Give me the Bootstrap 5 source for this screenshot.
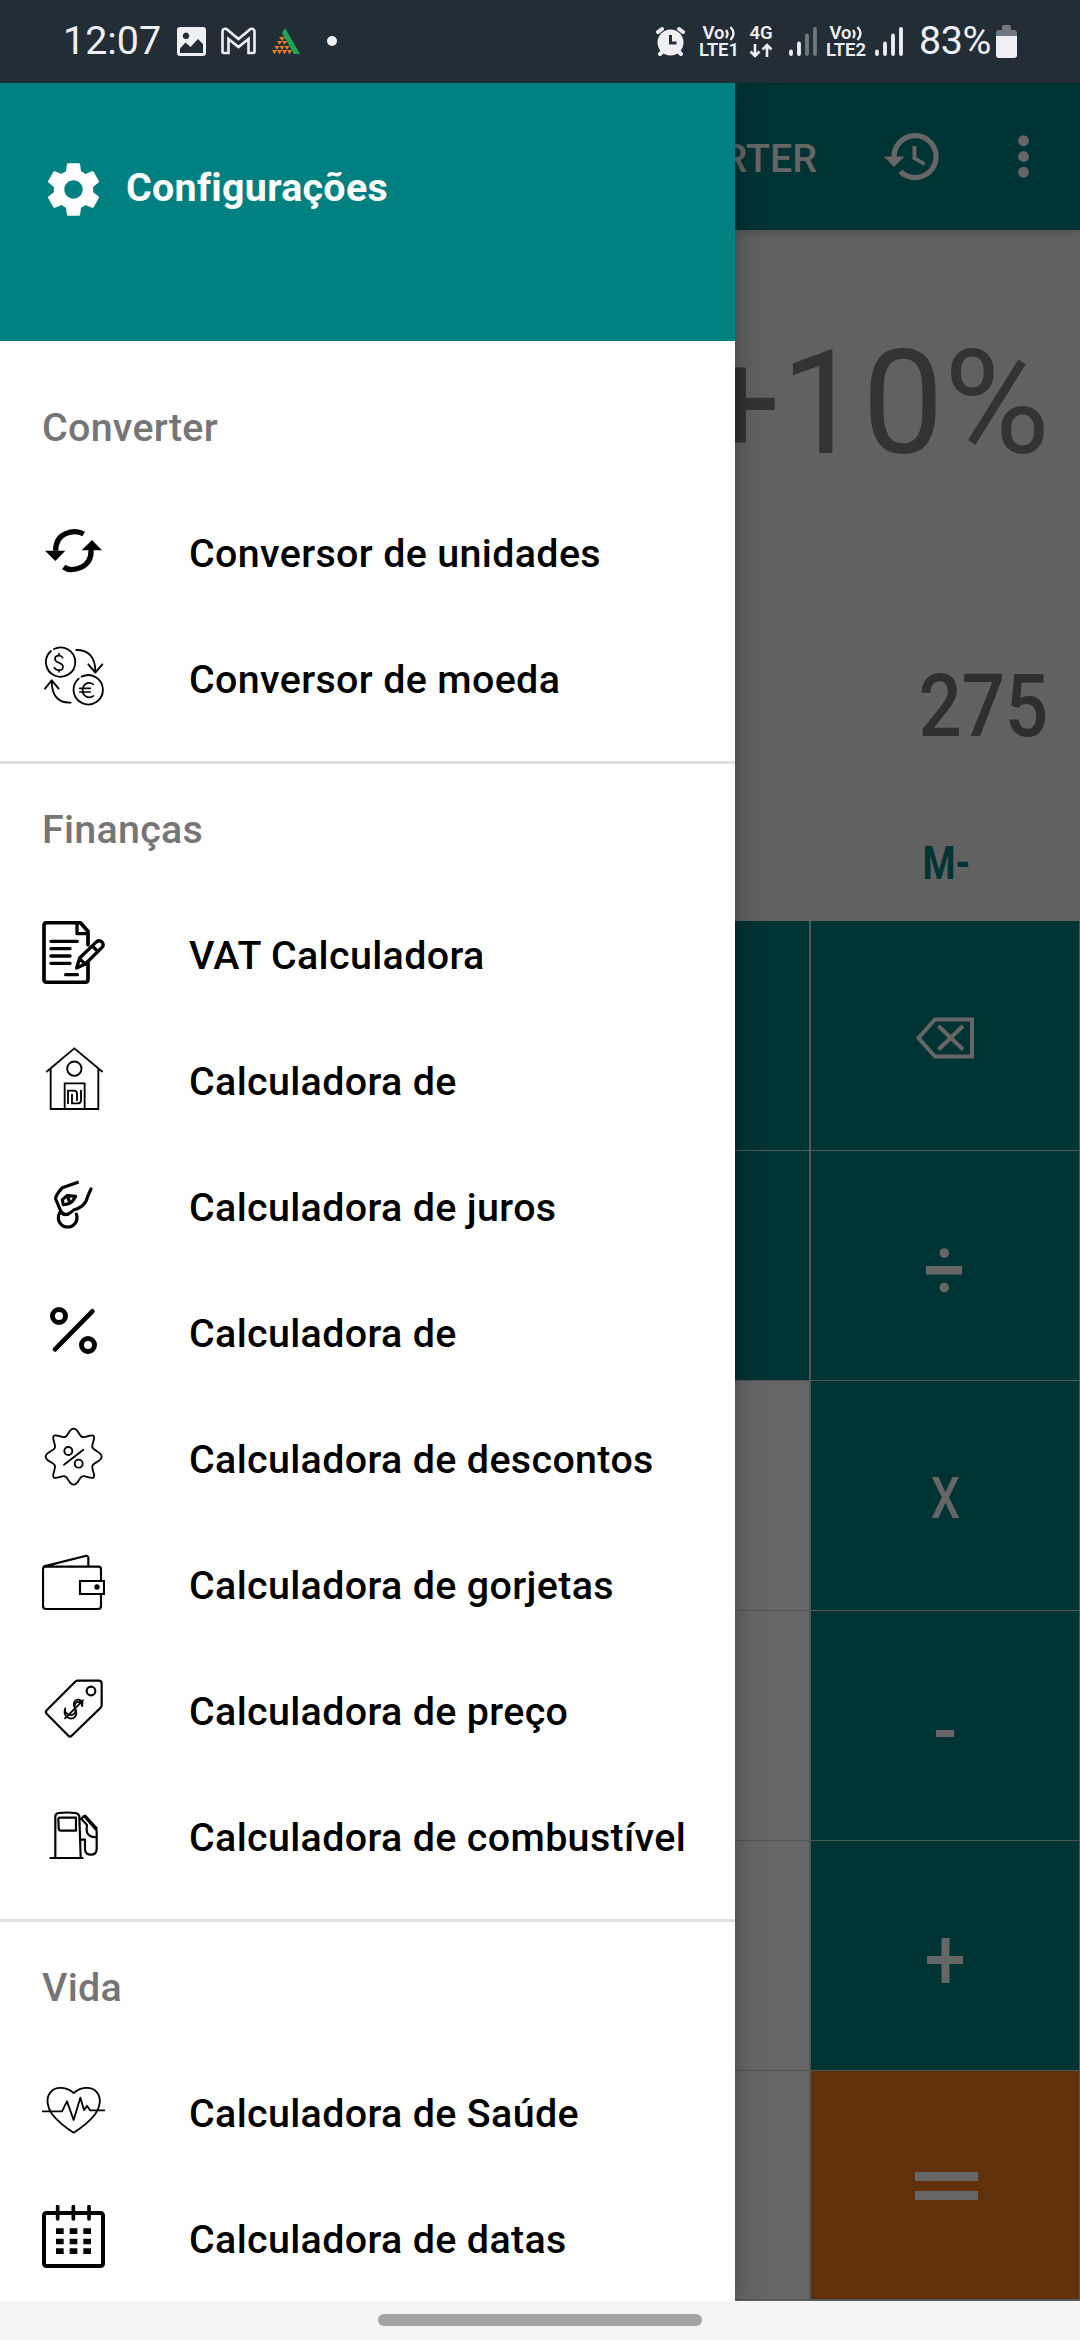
<!DOCTYPE html>
<html lang="pt">
<head>
<meta charset="utf-8">
<meta name="viewport" content="width=device-width, initial-scale=1">
<title>Calculadora</title>
<link rel="stylesheet" href="https://cdn.jsdelivr.net/npm/bootstrap@5.3.0/dist/css/bootstrap.min.css">
<style>
  body { font-family: Roboto, "Liberation Sans", sans-serif; width: 1080px; height: 2340px; overflow: hidden; background: #616161; }
  svg { display: block; flex: none; }
  .status { height: 83px; background: #232d36; color: #eef0f3; }
  .clock { font-size: 39.4px; line-height: 46px; padding-top: 18px; }
  .clock-time { padding-left: 63px; width: 177px; }
  .clock-batt { width: 75px; letter-spacing: -.4px; margin-left: 1px; margin-right: -1px; }
  .net { font-size: 18.5px; line-height: 17px; font-weight: 600; text-align: center; width: 42px; padding-top: 25px; }
  .stage { height: 2218px; }
  .drawer { width: 735px; z-index: 2; box-shadow: 0 0 26px rgba(0,0,0,.35); overflow: hidden; clip-path: inset(0 -40px 0 0); }
  .drawer-head { height: 258px; background: #008080; padding: 75px 42px 0; gap: 21px; font-size: 39.4px; line-height: 46px; font-weight: 700; letter-spacing: .28px; }
  .drawer-head span { padding-top: 7px; }
  .sect { padding-bottom: 21px; border-bottom: 3px solid #e0e0e0; }
  .sect-first { padding-top: 21px; }
  .sect:last-of-type { border: 0; }
  .sect-title { height: 126px; padding: 43px 42px 0; font-size: 39.4px; line-height: 46px; font-weight: 500; letter-spacing: .28px; color: #757575; }
  .entry { height: 126px; padding: 31px 0 0 42px; gap: 84px; font-size: 39.4px; line-height: 46px; font-weight: 500; letter-spacing: .35px; color: #000; white-space: nowrap; }
  .entry span { padding-top: 12px; }
  .ln { fill: none; stroke: #000; stroke-linecap: round; stroke-linejoin: round; }
  .app { width: 345px; color: #666; }
  .topbar { height: 147px; background: #033; padding-right: 25px; font-size: 39.4px; font-weight: 500; box-shadow: 0 2px 8px rgba(0,0,0,.2); }
  .topbar span { margin-right: 64px; padding-top: 4px; }
  .display { height: 691px; background: #616161; color: #333; }
  .expr { font-size: 145px; line-height: 170px; padding: 88px 30px 0 0; white-space: nowrap; }
  .result { font-size: 87px; line-height: 102px; font-weight: 500; padding: 167px 32px 0 0; color: #2f2f2f; }
  .result span, .mem span { display: inline-block; transform: scaleX(.875); transform-origin: 100% 50%; }
  .mem { font-size: 46px; line-height: 54px; font-weight: 700; padding: 79px 110px 0 0; color: #033; }
  .mem span { transform: scaleX(.82); }
  .keys { height: 230px; border-bottom: 1px solid #4f5857; }
  .keys:last-child { height: 229px; }
  .side { width: 74px; background: #666; }
  .teal { background: #033; }
  .op { border-left: 2px solid #4f5857; border-right: 1px solid #4f5857; }
  .orange { background: #60310a; }
  .key-x { display: inline-block; font-size: 58px; line-height: 68px; font-weight: 500; transform: scaleX(.8); padding-top: 5px; }
  .gesture { height: 39px; background: #f5f5f5; padding-top: 13px; }
  .pill { width: 324px; height: 12px; background: #a3a3a3; }
</style>
<script src="https://cdn.jsdelivr.net/npm/bootstrap@5.3.0/dist/js/bootstrap.bundle.min.js"></script>
</head>
<body>
<header class="status d-flex">
  <div class="clock clock-time">12:07</div>
  <svg width="170" height="83" viewBox="177 0 170 83">
    <path fill="#eef0f3" fill-rule="evenodd" d="M180 27h23a3 3 0 0 1 3 3v23a3 3 0 0 1-3 3h-23a3 3 0 0 1-3-3V30a3 3 0 0 1 3-3zM186 32.500a3.300 3.300 0 1 0 .01 0zM180 53h23v-9l-5-5-7.500 8-5-4.500-5.500 6z"/>
    <path d="M222.500 52V32q0-4 4-3l12 10 12-10q4-1 4 3v20q0 1-1 1h-5V39l-10 8-10-8v14h-5q-1 0-1-1z" fill="none" stroke="#eef0f3" stroke-width="2.600"/>
    <path fill="#1da653" d="M282 33l3-5 15 26h-6z"/>
    <g fill="#e07b28"><path d="M279 37h6l-3 4zM277 41h5l-2.500 4zM282 41h5l-2.500 4zM274.500 46h5l-2.500 4zM279.500 46h5l-2.500 4zM284.500 46h5l-2.500 4zM272 50h5l-2.500 4.500zM277 50h5l-2.500 4.500zM282 50h5l-2.500 4.500zM287 50h5l-2.500 4.500z"/></g>
    <circle cx="332" cy="41" r="5" fill="#eef0f3"/>
  </svg>
  <svg class="ms-auto" width="42" height="83" viewBox="656 0 42 83">
    <g stroke="#eef0f3" stroke-width="4" stroke-linecap="round"><path d="M658 32l4-3M679 29l4 3M660 54l4-4M681 54l-4-4"/></g>
    <circle cx="670.500" cy="42.500" r="13" fill="#eef0f3"/>
    <path d="M670.500 35v8h6" fill="none" stroke="#232d36" stroke-width="3"/>
  </svg>
  <div class="net"><div class="d-flex justify-content-center">Vo<svg width="11" height="17" viewBox="0 0 11 17"><path d="M1 5q3 4 0 8M5.500 2q6 6.500 0 13" fill="none" stroke="#eef0f3" stroke-width="2.300"/></svg></div>LTE1</div>
  <div class="net">4G<svg class="mx-auto" width="24" height="17" viewBox="0 0 24 17"><path d="M6 2v12M1.500 9.500L6 14l4.500-4.500M18 15V3M13.500 7.500L18 3l4.500 4.500" fill="none" stroke="#eef0f3" stroke-width="2.600"/></svg></div>
  <svg width="43" height="83" viewBox="782 0 43 83"><g stroke="#eef0f3" stroke-width="3.800" stroke-linecap="round"><path d="M791 51.500V54M799 43.500V54"/><path stroke="#70777e" d="M807 35.500V54M815 29V54"/></g></svg>
  <div class="net"><div class="d-flex justify-content-center">Vo<svg width="11" height="17" viewBox="0 0 11 17"><path d="M1 5q3 4 0 8M5.500 2q6 6.500 0 13" fill="none" stroke="#eef0f3" stroke-width="2.300"/></svg></div>LTE2</div>
  <svg width="51" height="83" viewBox="867 0 51 83"><g stroke="#eef0f3" stroke-width="3.800" stroke-linecap="round"><path d="M877 51.500V54M885 43.500V54M893 35.500V54M901 29V54"/></g></svg>
  <div class="clock clock-batt">83%</div>
  <svg width="87" height="83" viewBox="993 0 87 83"><path fill="#70777e" d="M996 37v-4q0-3 3-3h3v-3q0-2 2-2h5q2 0 2 2v3h3q3 0 3 3v4z"/><path fill="#eef0f3" d="M996 36h21v19q0 3-3 3h-15q-3 0-3-3z"/></svg>
</header>

<main class="stage d-flex">
  <nav class="drawer bg-white position-relative">
    <div class="drawer-head d-flex text-white">
      <svg width="63" height="63" viewBox="0 0 24 24" fill="#fff"><path d="M19.430 12.980c.04-.32.07-.64.07-.98s-.03-.66-.07-.98l2.110-1.650c.19-.15.24-.42.12-.64l-2-3.460c-.12-.22-.39-.3-.61-.22l-2.490 1c-.52-.4-1.080-.73-1.690-.98l-.38-2.650C14.460 2.180 14.250 2 14 2h-4c-.25 0-.46.18-.49.42l-.38 2.650c-.61.25-1.170.59-1.690.98l-2.490-1c-.23-.09-.49 0-.61.22l-2 3.460c-.13.22-.07.49.12.64l2.110 1.650c-.04.32-.07.65-.07.98s.03.66.07.98l-2.110 1.650c-.19.15-.24.42-.12.64l2 3.460c.12.22.39.3.61.22l2.490-1c.52.4 1.080.73 1.690.98l.38 2.650c.03.24.24.42.49.42h4c.25 0 .46-.18.49-.42l.38-2.650c.61-.25 1.170-.59 1.690-.98l2.490 1c.23.09.49 0 .61-.22l2-3.460c.12-.22.07-.49-.12-.64l-2.110-1.650zM12 15.500c-1.930 0-3.500-1.570-3.500-3.500s1.570-3.500 3.500-3.500 3.500 1.570 3.500 3.500-1.570 3.500-3.500 3.500z"/></svg>
      <span>Configurações</span>
    </div>

    <section class="sect sect-first">
      <div class="sect-title">Converter</div>
      <div class="entry d-flex">
        <svg width="63" height="63" viewBox="126 87 189 189"><path d="M167 182q0-38 30-51t54 1M273 180q2 38-30 52t-52-1" fill="none" stroke="#000" stroke-width="16"/><path d="M135 182h61l-30 31zM245 181h61l-30-31z"/></svg>
        <span>Conversor de unidades</span>
      </div>
      <div class="entry d-flex">
        <svg width="63" height="63" viewBox="126 465 189 189"><g class="ln" stroke-width="5.500"><path d="M162 477a44 44 0 1 1-9 6M245 560a44 44 0 1 1-9 6"/><path d="M229 480c38 0 58 22 57 67M265 523l21 25 21-25M212 638c-38 2-57-22-57-65M135 596l20-25 21 25"/><path stroke-width="5" d="M188 503c-6-10-23-8-23 4 0 14 24 9 24 23 0 13-20 14-26 3M177 491v7M177 540v6M280 583c-16-10-32 0-32 18s17 26 32 17M239 595h32M239 606h32"/></g></svg>
        <span>Conversor de moeda</span>
      </div>
    </section>

    <section class="sect">
      <div class="sect-title">Finanças</div>
      <div class="entry d-flex">
        <svg width="63" height="63" viewBox="126 93 189 189"><g class="ln" stroke-width="11"><path d="M264 218v50q0 9-9 9H141q-9 0-9-9V107q0-9 9-9h100l23 26v40"/><path stroke-width="10" d="M231 100v31h31M153 154h79M153 176h57M153 198h57M153 220h57M197 254h35"/><path stroke-width="10" d="M230 234l9-30 51-49q8-6 16 1 7 8 0 16l-50 50zM239 206l17 17M277 168l16 16"/></g></svg>
        <span>VAT Calculadora</span>
      </div>
      <div class="entry d-flex">
        <svg width="63" height="63" viewBox="126 471 189 189"><g fill="none" stroke="#000" stroke-width="5.500"><path d="M139 546l84-71 85 71M152 536v121h143V536"/><circle cx="223" cy="536" r="21.500"/><path d="M194 657v-77h60v77M204 642v-40h18q9 0 9 9v22M216 612v28h18q9 0 9-9v-31"/></g></svg>
        <span>Calculadora de</span>
      </div>
      <div class="entry d-flex">
        <svg width="63" height="63" viewBox="126 849 189 189"><g class="ln" stroke-width="9.500"><path stroke-linecap="butt" d="M236 876l-49 17q-21 23-20 34l16 38q8 12 22 7"/><path d="M273 897l-10 22q-4 18-17 29-10 8-25 12-8 8-16 12-14 6-22-7"/><circle cx="203" cy="983" r="28" stroke-dasharray="117 59" stroke-dashoffset="12"/><path d="M190 944l-3-15 14-12 26 2-10 15q-8 8-20 9M201 917l6 14"/></g></svg>
        <span>Calculadora de juros</span>
      </div>
      <div class="entry d-flex">
        <svg width="63" height="63" viewBox="126 87 189 189"><g class="ln" stroke-width="15"><circle cx="177" cy="138" r="19.500"/><circle cx="264" cy="225" r="19.500"/><path stroke-width="14" d="M165 238L277 124"/></g></svg>
        <span>Calculadora de</span>
      </div>
      <div class="entry d-flex">
        <svg width="63" height="63" viewBox="126 465 189 189"><g class="ln" stroke-width="5.500"><path d="M221 476c14 0 15 22 26 25s28-10 34-3-7 24-4 34 28 14 28 28-25 17-28 28 10 27 4 34-24-6-34-3-12 25-26 25-16-22-26-25-28 10-34 3 6-23 4-34-28-14-28-28 26-17 28-28-10-27-4-34 24 6 34 3 12-25 26-25z"/><circle cx="205" cy="543" r="12"/><circle cx="236" cy="581" r="12"/><path d="M192 584l58-45"/></g></svg>
        <span>Calculadora de descontos</span>
      </div>
      <div class="entry d-flex">
        <svg width="63" height="63" viewBox="126 843 189 189"><g class="ln" stroke-width="6.500"><path d="M303 933v-35q0-8-8-8H137q-8 0-8 8v110q0 9 9 9h156q9 0 9-9v-33M132 889l124-31q9-2 9 7v23"/><path stroke-linejoin="miter" d="M240 933h72v39h-72z"/></g><circle cx="291" cy="951" r="8"/></svg>
        <span>Calculadora de gorjetas</span>
      </div>
      <div class="entry d-flex">
        <svg width="63" height="63" viewBox="126 81 189 189"><g class="ln" stroke-width="6.500"><path d="M232 92h64q9 0 9 9v64q0 5-4 9l-86 83q-5 5-10 0l-65-66q-5-5 0-10l84-84q4-5 8-5z"/><circle cx="273" cy="123" r="13"/><path stroke-width="5.500" d="M195 205l54-54M246 166c6-13-12-22-21-13-12 13 10 25-1 37-12 13-34-2-28-15"/><path stroke-width="5.500" d="M194 182c-3 20 21 31 32 17 11-13-10-27 0-39 7-9 20-3 21 8"/></g></svg>
        <span>Calculadora de preço</span>
      </div>
      <div class="entry d-flex">
        <svg width="63" height="63" viewBox="126 459 189 189"><g class="ln" stroke-width="6.500"><path d="M151 624h97M166 622V499q0-8 10-10 25-3 50 0 10 1 12 10l4 123M175 507q0-4 4-4h49v39h-46q-5 0-6-6zM242 569h13v30q1 15 18 15 16 0 17-15v-57l-38-44-8 8 17 19q-5 26 10 33 7 4 19 3M256 497l34 38"/></g></svg>
        <span>Calculadora de combustível</span>
      </div>
    </section>

    <section class="sect">
      <div class="sect-title">Vida</div>
      <div class="entry d-flex">
        <svg width="63" height="63" viewBox="126 87 189 189"><g class="ln" stroke-width="5.500"><path d="M221 129c-20-17-51-22-68-4-18 20-10 50 3 67q22 29 65 56 43-27 65-56c13-17 21-47 3-67-17-18-48-13-68 4z"/><path d="M128 184h58l15-30 20 56 20-67 11 37 9-13 9 14h43"/></g></svg>
        <span>Calculadora de Saúde</span>
      </div>
      <div class="entry d-flex">
        <svg width="63" height="63" viewBox="126 465 189 189"><g class="ln" stroke-width="12"><rect x="132" y="489" width="177" height="159" rx="7"/><path stroke-width="11" d="M173 470v37M220 470v37M267 470v37"/></g><path d="M168 535h23v17h-23zM209 535h23v17h-23zM250 535h23v17h-23zM168 566h23v17h-23zM209 566h23v17h-23zM250 566h23v17h-23zM168 595h23v17h-23zM209 595h23v17h-23zM250 595h23v17h-23z"/></svg>
        <span>Calculadora de datas</span>
      </div>
    </section>
  </nav>

  <div class="app d-flex flex-column overflow-hidden">
    <div class="topbar d-flex align-items-center justify-content-end position-relative">
      <span>CONVERTER</span>
      <svg width="63" height="63" viewBox="0 0 24 24" fill="#666"><path d="M13 3c-4.970 0-9 4.030-9 9H1l3.890 3.890.07.14L9 12H6c0-3.870 3.130-7 7-7s7 3.130 7 7-3.130 7-7 7c-1.930 0-3.680-.79-4.940-2.060l-1.420 1.420C8.270 19.990 10.510 21 13 21c4.970 0 9-4.030 9-9s-4.030-9-9-9zm-1 5v5l4.280 2.540.72-1.210-3.500-2.080V8H12z"/></svg>
      <svg class="ms-5" width="63" height="63" viewBox="0 0 24 24" fill="#666"><circle cx="12" cy="6" r="2.050"/><circle cx="12" cy="12" r="2.050"/><circle cx="12" cy="18" r="2.050"/></svg>
    </div>
    <div class="display text-end">
      <div class="expr d-flex justify-content-end">+10%</div>
      <div class="result"><span>275</span></div>
      <div class="mem"><span>M-</span></div>
    </div>
    <div class="keys d-flex"><div class="side teal"></div><div class="op teal flex-fill d-flex align-items-center justify-content-center">
      <svg width="80" height="80" viewBox="-40 -40 80 80" fill="none" stroke="#666" stroke-width="4"><path d="M-26.500 2l15.500-18.500H27v37h-38zM-6.500-9.500L18-0M0 0" stroke="none"/><path d="M-26.500 2l16.500-18.500H27v37h-37zM-6.500-10L18 13.500M18-10L-6.500 13.500"/></svg></div></div>
    <div class="keys d-flex"><div class="side teal"></div><div class="op teal flex-fill d-flex align-items-center justify-content-center">
      <svg width="80" height="80" viewBox="-40 -40 80 80" fill="#666"><path d="M-19 0h36v8.500h-36z"/><circle cx="-.7" cy="-13" r="4.800"/><circle cx="-.7" cy="21.500" r="4.800"/></svg></div></div>
    <div class="keys d-flex"><div class="side"></div><div class="op teal flex-fill d-flex align-items-center justify-content-center"><span class="key-x">X</span></div></div>
    <div class="keys d-flex"><div class="side"></div><div class="op teal flex-fill d-flex align-items-center justify-content-center">
      <svg width="80" height="80" viewBox="-40 -40 80 80" fill="#666"><path d="M-9 4H9v7H-9z"/></svg></div></div>
    <div class="keys d-flex"><div class="side"></div><div class="op teal flex-fill d-flex align-items-center justify-content-center">
      <svg width="80" height="80" viewBox="-40 -40 80 80" fill="#666"><path d="M-18 0H18v8h-36zM-3.500-18h8v45h-8z"/></svg></div></div>
    <div class="keys d-flex"><div class="side"></div><div class="op orange flex-fill d-flex align-items-center justify-content-center">
      <svg width="80" height="80" viewBox="-40 -40 80 80" fill="#666"><path d="M-30-13h63v9h-63zM-30 6h63v9h-63z"/></svg></div></div>
  </div>
</main>
<footer class="gesture d-flex justify-content-center"><div class="pill rounded-pill"></div></footer>
</body>
</html>
